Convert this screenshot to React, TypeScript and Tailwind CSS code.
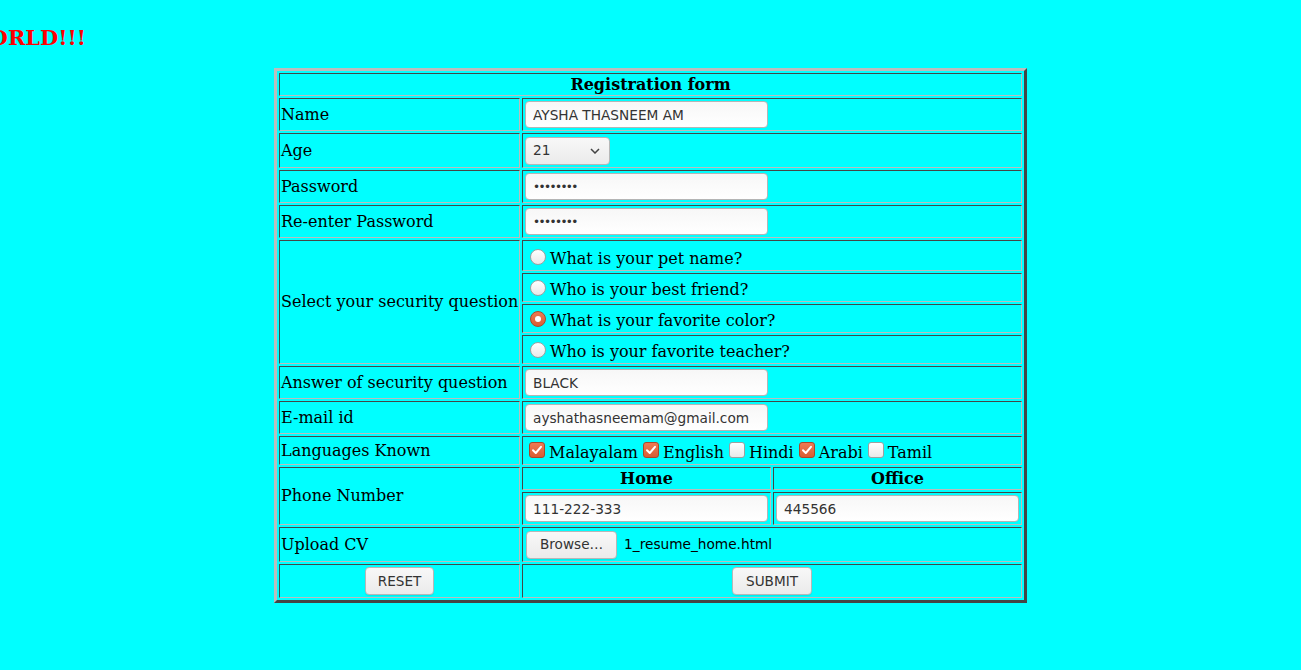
import React from 'react';

const serif = "font-['DejaVu_Serif',serif]";
const sans = "font-['DejaVu_Sans',sans-serif]";

const Cell: React.FC<{ className?: string; children?: React.ReactNode }> = ({ className = '', children }) => (
    <div className={`flex items-center border border-t-[#464646] border-l-[#464646] border-r-[#bcbcbc] border-b-[#bcbcbc] p-px ${className}`}>
        {children}
    </div>
);

const TextBox: React.FC<{ value: string; password?: boolean }> = ({ value, password }) => (
    <input
        readOnly
        defaultValue={value}
        className={`ml-px h-[27px] w-[243px] rounded-[4px] border border-[#b5b5b5] bg-gradient-to-b from-[#f7f7f7] to-white pl-[7px] text-[#333] outline-none ${sans} ${password ? 'text-[12px] tracking-[-1.6px]' : 'text-[13.7px]'}`}
    />
);

const Btn: React.FC<{ label: string; className?: string }> = ({ label, className = '' }) => (
    <button className={`h-[28px] rounded-[4px] border border-[#b7b7b7] bg-gradient-to-b from-[#f8f8f8] to-[#ebebeb] px-[12px] text-[13.6px] text-[#333] shadow-[0_1px_1px_rgba(0,0,0,0.08)] ${sans} ${className}`}>
        {label}
    </button>
);

const Radio: React.FC<{ checked?: boolean }> = ({ checked }) =>
    checked ? (
        <span className="mt-[3px] mb-[3px] ml-[6px] mr-[4px] flex h-[16px] w-[16px] shrink-0 items-center justify-center rounded-full border border-[#a9482a] bg-gradient-to-b from-[#ee7a52] to-[#d85e35]">
            <span className="h-[6px] w-[6px] rounded-full bg-white" />
        </span>
    ) : (
        <span className="mt-[3px] mb-[3px] ml-[6px] mr-[4px] h-[16px] w-[16px] shrink-0 rounded-full border border-[#a0a0a0] bg-gradient-to-b from-white to-[#e9e9e9]" />
    );

const Check: React.FC<{ checked?: boolean }> = ({ checked }) =>
    checked ? (
        <span className="mt-[3px] mb-[4px] flex h-[16px] w-[16px] shrink-0 items-center justify-center rounded-[3px] border border-[#a9482a] bg-gradient-to-b from-[#ee7a52] to-[#d85e35]">
            <svg width="12" height="12" viewBox="0 0 12 12">
                <path d="M2 6.2 L4.8 9 L10 2.8" fill="none" stroke="#fff" strokeWidth="2" strokeLinecap="round" strokeLinejoin="round" />
            </svg>
        </span>
    ) : (
        <span className="mt-[3px] mb-[4px] h-[16px] w-[16px] shrink-0 rounded-[3px] border border-[#a0a0a0] bg-gradient-to-b from-white to-[#e9e9e9]" />
    );

const questions = [
    { q: 'What is your pet name?', on: false },
    { q: 'Who is your best friend?', on: false },
    { q: 'What is your favorite color?', on: true },
    { q: 'Who is your favorite teacher?', on: false },
];

const languages = [
    { name: 'Malayalam', on: true },
    { name: 'English', on: true },
    { name: 'Hindi', on: false },
    { name: 'Arabi', on: true },
    { name: 'Tamil', on: false },
];

const App: React.FC = () => {
    return (
        <div className={`flex min-h-[670px] w-full flex-col bg-[#00ffff] text-black ${serif}`}>
            {/* marquee, caught mid-scroll */}
            <div className="mt-[26px] flex h-[24px] w-[86px] justify-end overflow-hidden">
                <span className="whitespace-nowrap text-[21px] font-bold leading-[24px] text-[#ff0000]">HELLO WORLD!!!</span>
            </div>

            <div className="mx-auto mt-[18px] grid grid-cols-[241px_249px_249px] grid-rows-[23px_33px_35px_33px_33px_31px_29px_29px_29px_33px_33px_29px_23px_33px_35px_34px] gap-[2px] border-[3px] border-t-[#bdbdbd] border-l-[#bdbdbd] border-r-[#454545] border-b-[#454545] p-[2px] text-[16px]">
                <Cell className="col-span-3 justify-center font-bold">Registration form</Cell>

                <Cell>Name</Cell>
                <Cell className="col-span-2"><TextBox value="AYSHA THASNEEM AM" /></Cell>

                <Cell>Age</Cell>
                <Cell className="col-span-2">
                    <div className={`ml-px flex h-[28px] w-[85px] items-center justify-between rounded-[4px] border border-[#b7b7b7] bg-gradient-to-b from-[#f8f8f8] to-[#ebebeb] pl-[7px] pr-[9px] text-[13.7px] text-[#333] ${sans}`}>
                        <span>21</span>
                        <svg width="10" height="6" viewBox="0 0 10 6">
                            <path d="M1 1 L5 5 L9 1" fill="none" stroke="#444" strokeWidth="1.5" />
                        </svg>
                    </div>
                </Cell>

                <Cell>Password</Cell>
                <Cell className="col-span-2"><TextBox value="••••••••" password /></Cell>

                <Cell>Re-enter Password</Cell>
                <Cell className="col-span-2"><TextBox value="••••••••" password /></Cell>

                <Cell className="row-span-4 whitespace-nowrap">Select your security question</Cell>
                {questions.map((item, i) => (
                    <Cell key={item.q} className={`col-span-2 ${i === 0 ? 'pt-[3px]' : ''}`}>
                        <div className="flex items-end">
                            <Radio checked={item.on} />
                            <span className="leading-[18px]">{item.q}</span>
                        </div>
                    </Cell>
                ))}

                <Cell>Answer of security question</Cell>
                <Cell className="col-span-2"><TextBox value="BLACK" /></Cell>

                <Cell>E-mail id</Cell>
                <Cell className="col-span-2"><TextBox value="ayshathasneemam@gmail.com" /></Cell>

                <Cell>Languages Known</Cell>
                <Cell className="col-span-2">
                    <div className="ml-[5px] flex items-end">
                        {languages.map(l => (
                            <div key={l.name} className="mr-[5px] flex items-end gap-[4px]">
                                <Check checked={l.on} />
                                <span className="leading-[18px]">{l.name}</span>
                            </div>
                        ))}
                    </div>
                </Cell>

                <Cell className="row-span-2">Phone Number</Cell>
                <Cell className="justify-center font-bold">Home</Cell>
                <Cell className="justify-center font-bold">Office</Cell>
                <Cell><TextBox value="111-222-333" /></Cell>
                <Cell><TextBox value="445566" /></Cell>

                <Cell>Upload CV</Cell>
                <Cell className="col-span-2">
                    <Btn label="Browse…" className="ml-[2px] px-[13px]" />
                    <span className={`ml-[7px] text-[13.7px] ${sans}`}>1_resume_home.html</span>
                </Cell>

                <Cell className="justify-center"><Btn label="RESET" /></Cell>
                <Cell className="col-span-2 justify-center"><Btn label="SUBMIT" className="px-[13px]" /></Cell>
            </div>
        </div>
    );
};

export default App;
